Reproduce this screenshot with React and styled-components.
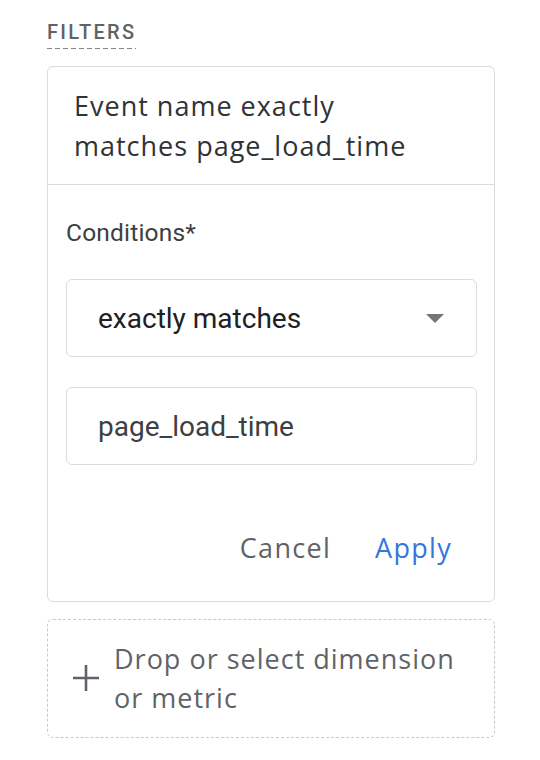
import styled, { createGlobalStyle } from "styled-components";

const GlobalStyle = createGlobalStyle`
  body {
    margin: 0;
    background: #ffffff;
    font-family: Roboto, "Liberation Sans", sans-serif;
  }
`;

const displayFont = `"Open Sans", Roboto, sans-serif`;

const Page = styled.div`
  padding: 19px 46px 0 47px;
  width: 448px;
`;

const SectionLabel = styled.div`
  display: inline-block;
  font-size: 20px;
  font-weight: 500;
  letter-spacing: 2.3px;
  color: #5f6368;
  line-height: 26px;
  padding-bottom: 4px;
  background-image: repeating-linear-gradient(
    to right,
    #80868b 0 5px,
    transparent 5px 8px
  );
  background-size: 100% 1px;
  background-repeat: no-repeat;
  background-position: bottom left;
`;

const Card = styled.div`
  margin-top: 17px;
  border: 1px solid #dadce0;
  border-radius: 6px;
`;

const CardHeader = styled.div`
  padding: 19px 60px 18px 26px;
  border-bottom: 1px solid #dadce0;
  font-family: ${displayFont};
  font-size: 27px;
  letter-spacing: 1px;
  line-height: 40px;
  color: #303336;
`;

const CardBody = styled.div`
  padding: 33px 17px 35px 18px;
`;

const FieldLabel = styled.div`
  font-size: 24.5px;
  letter-spacing: 0.2px;
  line-height: 30px;
  color: #3c4043;
  margin-bottom: 31px;
`;

const Field = styled.div`
  display: flex;
  align-items: center;
  justify-content: space-between;
  height: 76px;
  padding: 0 32px 0 31px;
  border: 1px solid #dadce0;
  border-radius: 6px;
  font-size: 28px;
  color: ${(p) => (p.$muted ? "#3c4043" : "#202124")};
  & + & {
    margin-top: 30px;
  }
`;

const Caret = styled.span`
  width: 0;
  height: 0;
  border-left: 9px solid transparent;
  border-right: 9px solid transparent;
  border-top: 9px solid #757575;
`;

const Actions = styled.div`
  display: flex;
  justify-content: flex-end;
  gap: 44px;
  margin-top: 65px;
  padding-right: 25px;
`;

const TextButton = styled.button`
  border: none;
  background: none;
  padding: 0;
  font-family: ${displayFont};
  font-size: 27px;
  font-weight: 500;
  letter-spacing: 1.3px;
  line-height: 36px;
  color: ${(p) => (p.$primary ? "#3476dc" : "#5f6368")};
  cursor: pointer;
`;

const DropZone = styled.div`
  margin-top: 17px;
  display: flex;
  align-items: center;
  gap: 14px;
  padding: 19px 24px 20px 24px;
  border: 1px dashed #c8cacd;
  border-radius: 6px;
  font-family: ${displayFont};
  font-size: 27px;
  letter-spacing: 1px;
  line-height: 39px;
  color: #5f6368;
`;

const PlusBox = styled.svg`
  flex-shrink: 0;
`;

const PlusIcon = () => (
  <PlusBox width="28" height="28" viewBox="0 0 28 28" fill="none">
    <path d="M14 1v26M1 14h26" stroke="#5f6368" strokeWidth="2.6" />
  </PlusBox>
);

export default function App() {
  return (
    <>
      <GlobalStyle />
      <Page>
        <SectionLabel>FILTERS</SectionLabel>
        <Card>
          <CardHeader>Event name exactly matches page_load_time</CardHeader>
          <CardBody>
            <FieldLabel>Conditions*</FieldLabel>
            <Field>
              <span>exactly matches</span>
              <Caret />
            </Field>
            <Field $muted>
              <span>page_load_time</span>
            </Field>
            <Actions>
              <TextButton type="button">Cancel</TextButton>
              <TextButton type="button" $primary>
                Apply
              </TextButton>
            </Actions>
          </CardBody>
        </Card>
        <DropZone>
          <PlusIcon />
          <span>Drop or select dimension or metric</span>
        </DropZone>
      </Page>
    </>
  );
}
